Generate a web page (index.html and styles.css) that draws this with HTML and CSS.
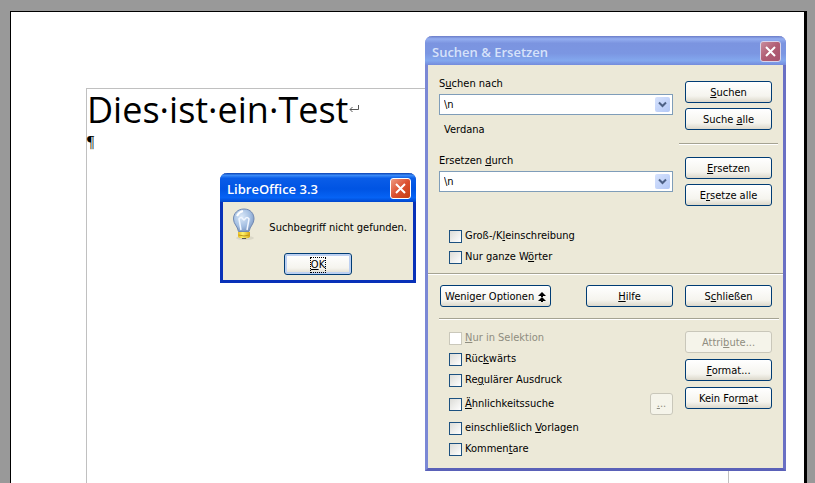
FILE: index.html
```html
<!DOCTYPE html>
<html lang="de">
<head>
    <meta charset="utf-8">
    <title>LibreOffice Writer</title>
    <link rel="stylesheet" href="styles.css">
</head>
<body>
<main class="sheet">
    <div class="text-area">
        <h1>Dies·ist·ein·Test<svg class="break" width="10" height="8" viewBox="0 0 10 8"><path d="M9.500 0v4.500H1M3.500 2L1 4.500 3.500 7" fill="none" stroke="#555"/></svg></h1>
        <p>¶</p>
    </div>
</main>

<section class="window message" role="alertdialog" aria-labelledby="message-title">
    <header class="titlebar">
        <h2 id="message-title">LibreOffice 3.3</h2>
        <button class="close" aria-label="Schließen"><svg width="13" height="13" viewBox="0 0 13 13"><path d="M2 2l9 9M11 2l-9 9" stroke="#fff" stroke-width="2"/></svg></button>
    </header>
    <div class="message-body">
        <div class="message-text">
            <svg width="24" height="33" viewBox="0 0 24 33">
                <defs>
                    <radialGradient id="glass" cx=".4" cy=".35" r=".7">
                        <stop offset="0" stop-color="#dce9f8"/>
                        <stop offset=".6" stop-color="#a5c0e3"/>
                        <stop offset="1" stop-color="#7894c0"/>
                    </radialGradient>
                    <linearGradient id="cap">
                        <stop offset="0" stop-color="#e9bd22"/>
                        <stop offset=".4" stop-color="#fff36b"/>
                        <stop offset="1" stop-color="#d5a514"/>
                    </linearGradient>
                </defs>
                <ellipse cx="13" cy="30" rx="9" ry="2" fill="#dad7c7"/>
                <path d="M12 1C5.500 1 1.500 5.500 1.500 11c0 5 4 7 5 12.500h10.500C18 18 22 16 22 11 22 5.500 18.500 1 12 1z" fill="url(#glass)" stroke="#7189b2"/>
                <path d="M9 22L7 11q2-3 4 0 1 2 2 0 2-3 4 0l-2 11" fill="none" stroke="#f2f7ff" stroke-width="1.500"/>
                <path d="M5 8q2-4 6-5" fill="none" stroke="#fff" stroke-width="2"/>
                <path d="M6 24h12v4q0 2-3 2l-1 1h-4l-1-1q-3 0-3-2z" fill="url(#cap)"/>
                <path d="M6.500 27q5.500 2 11 0" fill="none" stroke="#bd9619"/>
                <path d="M10 30.500h4" stroke="#555"/>
            </svg>
            <p>Suchbegriff nicht gefunden.</p>
        </div>
        <button class="btn ok"><span><u>O</u>K</span></button>
    </div>
</section>

<section class="window search" role="dialog" aria-labelledby="search-title">
    <header class="titlebar">
        <h2 id="search-title">Suchen &amp; Ersetzen</h2>
        <button class="close" aria-label="Schließen"><svg width="13" height="13" viewBox="0 0 13 13"><path d="M2 2l9 9M11 2l-9 9" stroke="#fff" stroke-width="2"/></svg></button>
    </header>

    <div class="columns terms">
        <div class="fields">
            <label for="find">S<u>u</u>chen nach</label>
            <div class="combo">
                <select id="find"><option>\n</option></select>
                <svg width="15" height="15" viewBox="0 0 15 15"><path d="M4 5.500L7.500 9 11 5.500" fill="none" stroke="#4d6185" stroke-width="2"/></svg>
            </div>
            <p class="attributes">Verdana</p>
            <label for="replace">Ersetzen <u>d</u>urch</label>
            <div class="combo">
                <select id="replace"><option>\n</option></select>
                <svg width="15" height="15" viewBox="0 0 15 15"><path d="M4 5.500L7.500 9 11 5.500" fill="none" stroke="#4d6185" stroke-width="2"/></svg>
            </div>
            <div class="checks">
                <label class="check"><input type="checkbox"><span>Groß-/K<u>l</u>einschreibung</span></label>
                <label class="check"><input type="checkbox"><span>Nur ganze W<u>ö</u>rter</span></label>
            </div>
        </div>
        <div class="buttons">
            <button class="btn"><span><u>S</u>uchen</span></button>
            <button class="btn"><span>Suche <u>a</u>lle</span></button>
            <hr>
            <button class="btn"><span><u>E</u>rsetzen</span></button>
            <button class="btn"><span>E<u>r</u>setze alle</span></button>
        </div>
    </div>

    <hr>

    <div class="actions">
        <button class="btn more">Weniger Optionen <svg width="8" height="10" viewBox="0 0 8 10"><path d="M4 0l4 4H5v1H3V4H0zM4 5l4 4H5v1H3V9H0z"/></svg></button>
        <button class="btn help"><span><u>H</u>ilfe</span></button>
        <button class="btn"><span>S<u>c</u>hließen</span></button>
    </div>

    <hr class="inset">

    <div class="columns options">
        <div class="checks">
            <label class="check disabled"><input type="checkbox" disabled><span><u>N</u>ur in Selektion</span></label>
            <label class="check"><input type="checkbox"><span>Rüc<u>k</u>wärts</span></label>
            <label class="check"><input type="checkbox"><span>Re<u>g</u>ulärer Ausdruck</span></label>
            <div class="similarity">
                <label class="check"><input type="checkbox"><span><u>Ä</u>hnlichkeitssuche</span></label>
                <button class="btn dots" disabled><span><u>.</u>..</span></button>
            </div>
            <label class="check"><input type="checkbox"><span>einschließlich <u>V</u>orlagen</span></label>
            <label class="check"><input type="checkbox"><span>Kommen<u>t</u>are</span></label>
        </div>
        <div class="buttons">
            <button class="btn" disabled><span>Attri<u>b</u>ute...</span></button>
            <button class="btn"><span><u>F</u>ormat...</span></button>
            <button class="btn"><span>Kein For<u>m</u>at</span></button>
        </div>
    </div>
</section>
</body>
</html>
```
FILE: styles.css
```css
* {
    box-sizing: border-box;
}

html, body {
    margin: 0;
    padding: 0;
    overflow: hidden;
}

body {
    display: flex;
    height: 100vh;
    padding: 11px 8px 0 10px;
    background: #999999;
    color: #000000;
    font-family: "DejaVu Sans Condensed", Tahoma, sans-serif;
    font-size: 11px;
    line-height: 16px;
}

h1, h2, p {
    margin: 0;
    font-weight: normal;
}

u {
    text-underline-offset: 1px;
}

/* document */

.sheet {
    display: flex;
    flex: 1;
    padding: 76px 75px 0;
    background: #ffffff;
    border: 1px solid #000000;
    border-right-width: 3px;
    border-bottom: 0;
}

.text-area {
    flex: 1;
    border: 1px solid #c0c0c0;
    border-bottom: 0;
}

.text-area h1 {
    font-family: "Open Sans", sans-serif;
    font-size: 36px;
    font-weight: 500;
    line-height: 42px;
    white-space: nowrap;
}

.text-area p {
    font-family: "Liberation Serif", serif;
    font-size: 16px;
    line-height: 22px;
}

.break {
    margin-left: 1px;
    vertical-align: 10px;
}

/* windows */

.window {
    position: absolute;
    background: #ece9d8;
    border: 3px solid #0a3fc4;
    border-top: 0;
    border-radius: 7px 7px 0 0;
}

.titlebar {
    display: flex;
    align-items: center;
    justify-content: space-between;
    height: 29px;
    margin: 0 -3px;
    padding: 2px 5px 0 7px;
    border-radius: 7px 7px 0 0;
    background: linear-gradient(#0a3fb0, #3c8cf8 8%, #0a5de8 18%, #0054e3 55%, #0663f5 85%, #0046cc);
}

.titlebar h2 {
    color: #ffffff;
    font-family: "Open Sans", sans-serif;
    font-size: 13px;
    font-weight: 600;
}

.close {
    display: flex;
    align-items: center;
    justify-content: center;
    width: 21px;
    height: 21px;
    padding: 0;
    border: 1px solid #ffffff;
    border-radius: 3px;
    background: linear-gradient(135deg, #ee9b82, #dc5030 50%, #c43c12);
}

.btn {
    height: 22px;
    padding: 2px 4px 0;
    border: 1px solid #003c74;
    border-radius: 3px;
    background: linear-gradient(#ffffff, #f5f4ee 70%, #dcd8cb);
    color: #000000;
    font: inherit;
    white-space: nowrap;
}

.btn:disabled {
    border-color: #c9c7ba;
    background: #f5f4ea;
    color: #8f8d80;
}

/* message box */

.message {
    top: 173px;
    left: 220px;
    width: 196px;
    border-color: #0831b8;
}

.message-body {
    display: flex;
    flex-direction: column;
    align-items: center;
    padding: 6px 6px 5px;
}

.message-text {
    display: flex;
    align-items: center;
    align-self: stretch;
    justify-content: space-between;
    padding-left: 3px;
    white-space: nowrap;
}

.message-text p {
    padding-top: 6px;
}

.ok {
    width: 68px;
    margin-top: 12px;
    box-shadow: inset 0 0 0 2px #bcd0f2;
}

.ok span {
    display: inline-block;
    outline: 1px dotted #000000;
    line-height: 14px;
}

/* search and replace */

.search {
    top: 36px;
    left: 425px;
    width: 361px;
    border-color: #7b88d5;
    border-right-color: #6a70c4;
    border-bottom-color: #5a61b8;
}

.search .titlebar {
    background: linear-gradient(#6a7cc8, #94aef0 10%, #7b94e0 25%, #7b96e2 60%, #83a8ee 85%, #748bdc);
}

.search .titlebar h2 {
    color: #d6e2fa;
}

.search .close {
    border-color: #d8d4ea;
    background: linear-gradient(135deg, #c98c9c, #b05d73 50%, #a7536e);
}

.search hr {
    height: 2px;
    margin: 0;
    border: 0;
    border-top: 1px solid #a5a392;
    background: #ffffff;
}

.search .inset {
    margin: 0 4px 0 11px;
}

.columns {
    display: grid;
    grid-template-columns: 1fr 87px;
    column-gap: 12px;
    padding: 0 11px;
}

.buttons {
    display: flex;
    flex-direction: column;
    gap: 5px;
}

.terms {
    padding-bottom: 8px;
}

.terms .buttons {
    padding-top: 16px;
}

.terms .buttons hr {
    margin: 8px -6px 7px;
}

.fields {
    display: flex;
    flex-direction: column;
    padding-top: 11px;
}

.combo {
    position: relative;
    margin-top: 2px;
}

.combo select {
    display: block;
    width: 100%;
    height: 21px;
    padding: 0 4px;
    border: 1px solid #7f9db9;
    border-radius: 0;
    background: #ffffff;
    color: #000000;
    font: inherit;
    appearance: none;
}

.combo svg {
    position: absolute;
    top: 3px;
    right: 3px;
    border-radius: 2px;
    background: linear-gradient(135deg, #d6e2fd, #b3c8f6);
    pointer-events: none;
}

.attributes {
    margin: 7px 0 15px;
    padding-left: 5px;
}

.checks {
    display: flex;
    flex-direction: column;
    gap: 5px;
    padding-left: 10px;
}

.fields .checks {
    padding-top: 36px;
}

.check {
    display: flex;
    align-items: center;
    gap: 3px;
}

.check input {
    width: 13px;
    height: 13px;
    margin: 0;
    border: 1px solid #1c5180;
    background: linear-gradient(135deg, #dcdcd7, #ffffff);
    appearance: none;
}

.check.disabled {
    color: #8f8d80;
}

.check.disabled input {
    border-color: #cac8bb;
    background: #ffffff;
}

.actions {
    display: grid;
    grid-template-columns: 111px 1fr 87px;
    column-gap: 12px;
    padding: 10px 11px 11px 12px;
}

.more {
    display: flex;
    align-items: center;
    justify-content: space-between;
}

.help {
    justify-self: end;
    width: 87px;
}

.options {
    padding-top: 10px;
    padding-bottom: 11px;
}

.options .buttons {
    padding-top: 1px;
    gap: 6px;
}

.similarity {
    display: flex;
    align-items: center;
    justify-content: space-between;
}

.dots {
    width: 23px;
    padding: 0;
}
```
